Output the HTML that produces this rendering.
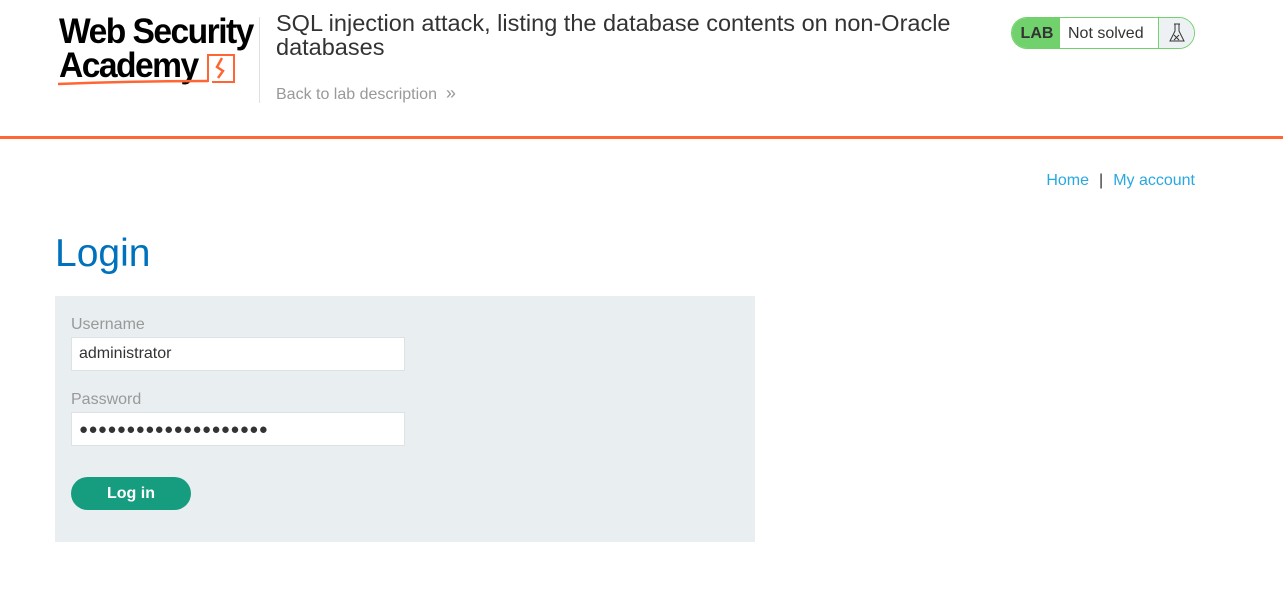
<!DOCTYPE html>
<html><head><meta charset="utf-8"><style>
*{box-sizing:border-box;margin:0;padding:0}
body{width:1283px;height:589px;background:#fff;font-family:"Liberation Sans",Arial,sans-serif;position:relative;overflow:hidden}
.abs{position:absolute}
.logo{left:59px;top:15px;font-size:35px;line-height:34px;letter-spacing:-1.6px;color:#000;font-weight:bold;transform:scaleX(0.96);transform-origin:left}
.sep{left:259px;top:17px;width:1px;height:86px;background:#e0e0e0}
.title{left:276px;top:11px;font-size:23.5px;line-height:24px;color:#333;width:720px}
.back{left:276px;top:83px;font-size:16px;color:#999}
.hr{left:0;top:136px;width:1283px;height:3px;background:#ff6633}
.badge{left:1011px;top:17px;width:184px;height:32px;border:1px solid #70d16d;border-radius:16px;overflow:hidden;display:flex}
.badge .l{background:#70d16d;width:48px;font-weight:bold;font-size:16px;color:#333;display:flex;align-items:center;justify-content:center;padding-left:2px;padding-top:2px}
.badge .m{width:99px;font-size:16px;color:#333;display:flex;align-items:center;padding-left:8px;padding-top:2px;border-right:1px solid #70d16d}
.badge .r{flex:1;background:#eef1f3;display:flex;align-items:center;justify-content:center}
.nav{right:88px;top:172px;font-size:16px;color:#29a8e0}
.nav span{color:#333;margin:0 10px}
h1{position:absolute;left:55px;top:232px;font-size:39px;font-weight:normal;color:#0071bc}
.box{left:55px;top:296px;width:700px;height:246px;background:#e9eef1}
label{position:absolute;left:16px;font-size:16px;color:#999}
.in{position:absolute;left:16px;width:334px;height:34px;background:#fff;border:1px solid #dde2e6;font-size:16px;color:#333;padding:7px 7px}
.btn{position:absolute;left:16px;top:181px;width:120px;height:33px;border-radius:17px;background:#169d7f;color:#fff;font-weight:bold;font-size:16px;text-align:center;line-height:33px}
</style></head><body>
<div class="abs logo">Web Security<br>Academy</div>
<svg class="abs" style="left:56px;top:50px" width="185" height="40"><path d="M152 32V5h26v27h-22" fill="none" stroke="#ff6633" stroke-width="2"/><path d="M166 8l-5 9 6 4-5 7" fill="none" stroke="#ff6633" stroke-width="2.5"/><path d="M2 34c50-2 100-3 150-3" stroke="#ff6633" stroke-width="2.5" fill="none"/></svg>
<div class="abs sep"></div>
<div class="abs title">SQL injection attack, listing the database contents on non-Oracle databases</div>
<div class="abs back">Back to lab description &nbsp;<span style="font-size:18px">»</span></div>
<div class="abs badge"><div class="l">LAB</div><div class="m">Not solved</div><div class="r"><svg width="18" height="22" viewBox="0 0 18 22"><path d="M6 2h6M7 2v7L2 19h14L11 9V2" fill="none" stroke="#333" stroke-width="1"/><path d="M6 13l5 5M11 13l-5 5" stroke="#333" stroke-width="1"/></svg></div></div>
<div class="abs hr"></div>
<div class="abs nav">Home<span>|</span>My account</div>
<h1>Login</h1>
<div class="abs box">
<label style="top:20px">Username</label>
<div class="in" style="top:41px">administrator</div>
<label style="top:95px">Password</label>
<div class="in" style="top:116px;font-size:15px;padding-top:8px;letter-spacing:0.4px">●●●●●●●●●●●●●●●●●●●●</div>
<div class="btn">Log in</div>
</div>
</body></html>
